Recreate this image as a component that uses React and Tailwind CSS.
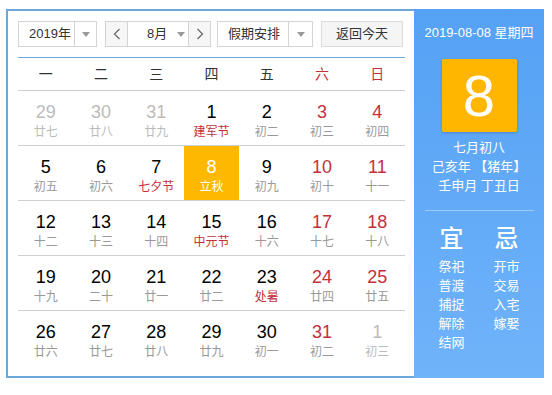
import React from 'react';

const FONT = { fontFamily: '"Liberation Sans", "Noto Sans CJK SC", sans-serif' };

const weekdays = [
  { t: '一' }, { t: '二' }, { t: '三' }, { t: '四' }, { t: '五' },
  { t: '六', red: true }, { t: '日', red: true },
];

// kind: 'other' = other month, 'red' = weekend, hol = holiday lunar (red)
const rows = [
  [['29', '廿七', 'other'], ['30', '廿八', 'other'], ['31', '廿九', 'other'], ['1', '建军节', '', true], ['2', '初二'], ['3', '初三', 'red'], ['4', '初四', 'red']],
  [['5', '初五'], ['6', '初六'], ['7', '七夕节', '', true], ['8', '立秋', 'today'], ['9', '初九'], ['10', '初十', 'red'], ['11', '十一', 'red']],
  [['12', '十二'], ['13', '十三'], ['14', '十四'], ['15', '中元节', '', true], ['16', '十六'], ['17', '十七', 'red'], ['18', '十八', 'red']],
  [['19', '十九'], ['20', '二十'], ['21', '廿一'], ['22', '廿二'], ['23', '处暑', '', true], ['24', '廿四', 'red'], ['25', '廿五', 'red']],
  [['26', '廿六'], ['27', '廿七'], ['28', '廿八'], ['29', '廿九'], ['30', '初一'], ['31', '初二', 'red'], ['1', '初三', 'other']],
];

const Caret = () => (
  <span className="block w-0 h-0 border-l-[4px] border-r-[4px] border-t-[5px] border-l-transparent border-r-transparent border-t-[#999]" />
);

const Chevron = ({ dir }) => (
  <svg width="8" height="12" viewBox="0 0 8 12" fill="none" stroke="#666" strokeWidth="1.2">
    {dir === 'left' ? <path d="M6.5 1 L1.5 6 L6.5 11" /> : <path d="M1.5 1 L6.5 6 L1.5 11" />}
  </svg>
);

const Cell = ({ d }) => {
  const [num, lunar, kind, hol] = d;
  const today = kind === 'today';
  let numColor = 'text-black';
  let lunarColor = 'text-[#999]';
  if (kind === 'other') { numColor = 'text-[#bbb]'; lunarColor = 'text-[#bbb]'; }
  if (kind === 'red') numColor = 'text-[#c4303a]';
  if (hol) lunarColor = 'text-[#c4303a]';
  if (today) { numColor = 'text-white'; lunarColor = 'text-white'; }
  return (
    <div className={`h-[54px] flex flex-col items-center pt-[10px] ${today ? 'bg-[#ffb800]' : ''}`}>
      <div className={`text-[18px] leading-[22px] ${numColor}`}>{num}</div>
      <div className={`text-[12px] leading-[18px] ${lunarColor}`}>{lunar}</div>
    </div>
  );
};

export default function App() {
  return (
    <div className="w-[552px] h-[395px] bg-white" style={FONT}>
      <div className="ml-[6px] pt-[9px] flex">
        {/* left calendar */}
        <div className="w-[408px] h-[369px] border-2 border-r-0 border-[#6ca7dc] pl-[10px] pr-[9px] pt-[10px]">
          <div className="flex items-center h-[26px] text-[13px] text-[#333]">
            <div className="w-[79px] h-[26px] border border-[#d4d4d4] flex items-center">
              <div className="w-[55px] pl-[10px]">2019年</div>
              <div className="flex-1 h-full border-l border-[#d4d4d4] flex items-center justify-center"><Caret /></div>
            </div>
            <div className="ml-[8px] w-[106px] h-[26px] border border-[#d4d4d4] flex items-center">
              <div className="w-[22px] h-full bg-[#f6f6f6] border-r border-[#d4d4d4] flex items-center justify-center"><Chevron dir="left" /></div>
              <div className="flex-1 flex items-center pl-[19px]">
                <span className="w-[30px]">8月</span>
                <Caret />
              </div>
              <div className="w-[22px] h-full bg-[#f6f6f6] border-l border-[#d4d4d4] flex items-center justify-center"><Chevron dir="right" /></div>
            </div>
            <div className="ml-[6px] w-[96px] h-[26px] border border-[#d4d4d4] flex items-center">
              <div className="w-[70px] pl-[10px]">假期安排</div>
              <div className="flex-1 h-full border-l border-[#d4d4d4] flex items-center justify-center"><Caret /></div>
            </div>
            <div className="ml-[8px] w-[82px] h-[26px] border border-[#dcdcdc] bg-[#f5f5f5] flex items-center justify-center">返回今天</div>
          </div>

          <div className="mt-[10px] border-t border-[#6ca7dc] grid grid-cols-7 h-[34px] items-center border-b border-b-[#cfcfcf] text-[14px]">
            {weekdays.map((w) => (
              <div key={w.t} className={`text-center ${w.red ? 'text-[#c4303a]' : 'text-[#333]'}`}>{w.t}</div>
            ))}
          </div>

          {rows.map((r, i) => (
            <div key={i} className={`grid grid-cols-7 ${i < rows.length - 1 ? 'border-b border-[#cfcfcf]' : ''}`}>
              {r.map((d, j) => <Cell key={j} d={d} />)}
            </div>
          ))}
        </div>

        {/* right panel */}
        <div className="w-[130px] h-[369px] bg-gradient-to-b from-[#55a1f4] to-[#6fb3fa] text-white flex flex-col items-center">
          <div className="mt-[16px] text-[13px] leading-[16px]">2019-08-08 星期四</div>
          <div className="mt-[18px] w-[75px] h-[73px] bg-[#ffb600] rounded-[2px] shadow-[0_1px_3px_rgba(0,0,0,0.2)] flex items-center justify-center text-[58px] leading-none">8</div>
          <div className="mt-[6px] text-[13px] leading-[19px] text-center">
            <div>七月初八</div>
            <div>己亥年 【猪年】</div>
            <div>壬申月 丁丑日</div>
          </div>
          <div className="mt-[15px] w-[109px] h-px bg-[#9ccbf7]" />
          <div className="mt-[14px] w-[110px] grid grid-cols-2">
            <div className="flex flex-col items-center">
              <div className="text-[24px] leading-[28px] font-medium">宜</div>
              <div className="mt-[4px] text-[13px] leading-[19px] text-center">
                <div>祭祀</div><div>普渡</div><div>捕捉</div><div>解除</div><div>结网</div>
              </div>
            </div>
            <div className="flex flex-col items-center">
              <div className="text-[24px] leading-[28px] font-medium">忌</div>
              <div className="mt-[4px] text-[13px] leading-[19px] text-center">
                <div>开市</div><div>交易</div><div>入宅</div><div>嫁娶</div>
              </div>
            </div>
          </div>
        </div>
      </div>
    </div>
  );
}
